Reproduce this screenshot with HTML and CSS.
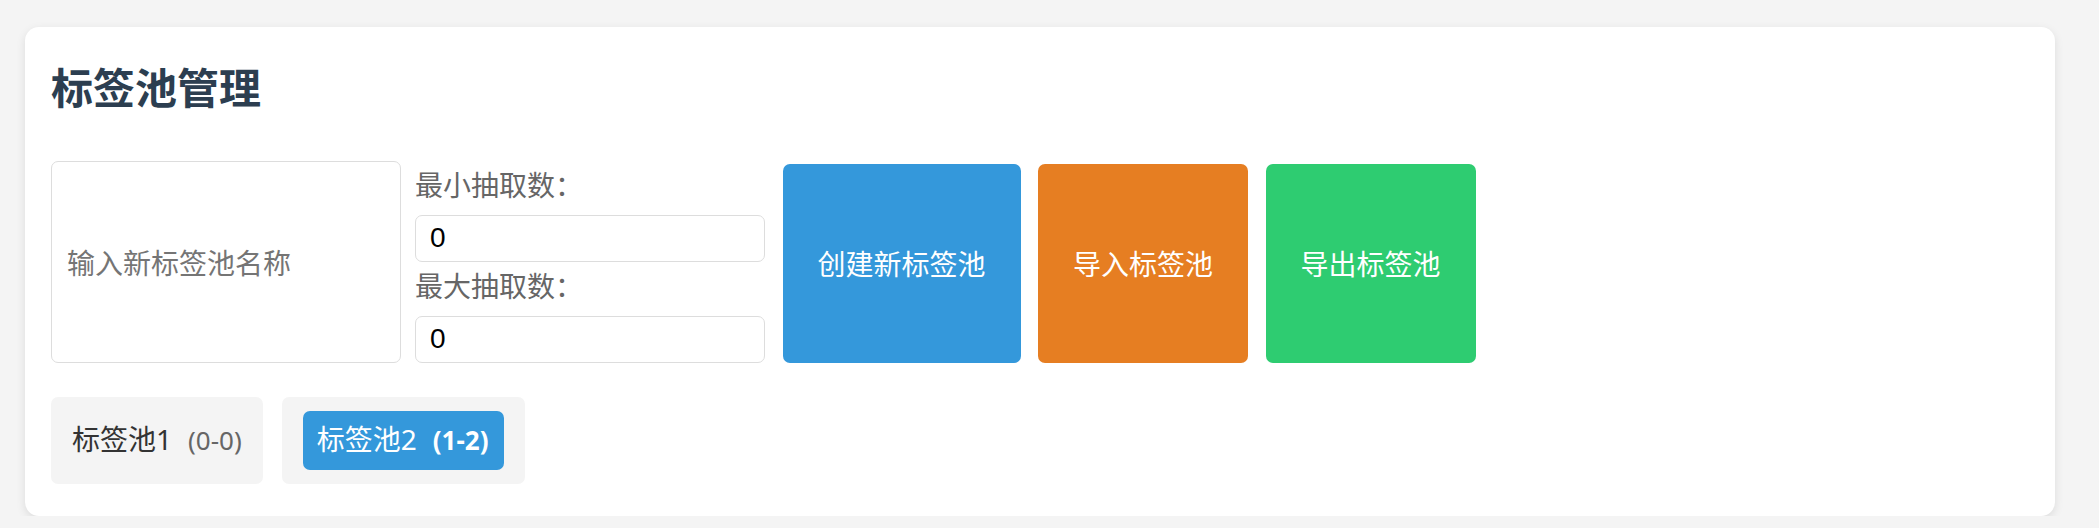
FILE: index.html
```html
<!DOCTYPE html>
<html lang="zh-CN">
<head>
<meta charset="utf-8">
<title>标签池管理</title>
<link rel="stylesheet" href="styles.css">
</head>
<body>
<div class="card">
  <h2 class="title">标签池管理</h2>
  <div class="controls">
    <input class="name-input" type="text" placeholder="输入新标签池名称">
    <div class="range">
      <label class="range-label">最小抽取数：</label>
      <input class="num-input" type="number" value="0">
      <label class="range-label">最大抽取数：</label>
      <input class="num-input" type="number" value="0">
    </div>
    <button class="btn btn-create">创建新标签池</button>
    <button class="btn btn-import">导入标签池</button>
    <button class="btn btn-export">导出标签池</button>
  </div>
  <div class="tags">
    <div class="tag"><span class="tag-name">标签池1<span class="count">(0-0)</span></span></div>
    <div class="tag"><span class="tag-name active">标签池2<span class="count">(1-2)</span></span></div>
  </div>
</div>
</body>
</html>
```
FILE: styles.css
```css
html, body {
  margin: 0;
  background: #f4f4f4;
}
body {
  padding: 27px 0 0 24.5px;
  font-family: "Noto Sans", "Noto Sans CJK SC", sans-serif;
  font-size: 28px;
  color: #333;
}
.card {
  width: 2030.5px;
  box-sizing: border-box;
  background: #fff;
  border-radius: 14px;
  box-shadow: 0 3px 10px rgba(0, 0, 0, 0.1);
  padding: 26.5px 26.5px 32px;
}
.title {
  margin: 6px 0 45px;
  font-size: 42px;
  line-height: 56px;
  font-weight: 700;
  color: #2c3e50;
}
.controls {
  display: flex;
  align-items: stretch;
}
.name-input {
  width: 350px;
  box-sizing: border-box;
  border: 1px solid #ddd;
  border-radius: 7px;
  padding: 0 15px;
  margin: 0;
  font-family: "Noto Sans CJK SC", sans-serif;
  font-size: 28px;
  color: #333;
  outline: none;
}
.name-input::placeholder {
  color: #757575;
}
.range {
  width: 350px;
  margin-left: 14px;
  display: flex;
  flex-direction: column;
}
.range-label {
  display: block;
  margin: 5px 0 12px;
  line-height: 37px;
  color: #666;
  font-family: "Noto Sans CJK SC", sans-serif;
}
.num-input {
  height: 47px;
  box-sizing: border-box;
  border: 1px solid #ddd;
  border-radius: 7px;
  padding: 0 14px;
  margin: 0;
  font-family: "Liberation Sans", Arial, sans-serif;
  font-size: 28px;
  color: #000;
  outline: none;
  -moz-appearance: textfield;
}
.num-input::-webkit-inner-spin-button,
.num-input::-webkit-outer-spin-button {
  -webkit-appearance: none;
  margin: 0;
}
.btn {
  margin: 3px 0 0 17.5px;
  padding: 0 35px;
  border: none;
  border-radius: 7px;
  color: #fff;
  font-family: "Noto Sans CJK SC", sans-serif;
  font-size: 28px;
  cursor: pointer;
}
.btn-create { background: #3498db; }
.btn-import { background: #e67e22; }
.btn-export { background: #2ecc71; }
.tags {
  display: flex;
  gap: 19px;
  margin-top: 34px;
}
.tag {
  background: #f4f4f4;
  border-radius: 7px;
  padding: 14px 21px;
}
.tag-name {
  display: block;
  padding: 10.5px 0;
  line-height: 37px;
  border-radius: 7px;
  color: #333;
  white-space: nowrap;
}
.count {
  margin-left: 16px;
  font-size: 26px;
  color: #666;
}
.tag-name.active {
  background: #3498db;
  color: #fff;
  padding: 10.5px 16px 10.5px 14px;
}
.tag-name.active .count {
  color: #fff;
  font-weight: 700;
}
```
